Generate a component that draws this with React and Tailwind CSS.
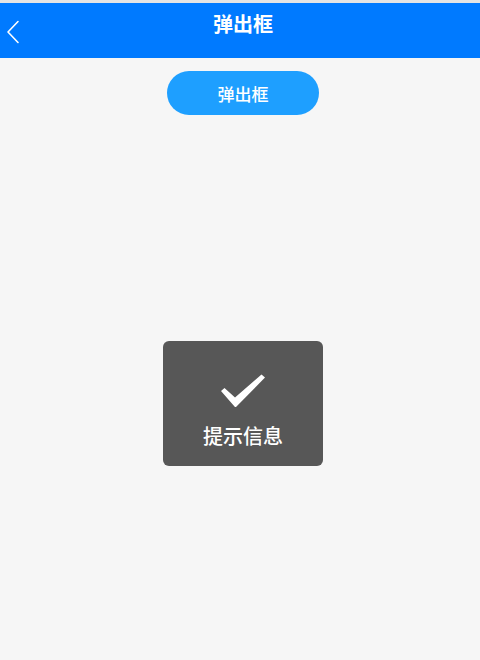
import React from "react";

const FONT = { fontFamily: '"Noto Sans CJK SC", "Noto Sans", sans-serif' };

function BackIcon() {
  return (
    <svg width="14" height="24" viewBox="0 0 14 24" fill="none">
      <path d="M12 1.5 L2 12 L12 22.5" stroke="white" strokeWidth="1.6" strokeLinecap="round" strokeLinejoin="round" />
    </svg>
  );
}

function CheckIcon() {
  return (
    <svg width="46" height="34" viewBox="0 0 46 34">
      <path d="M1 17 L4.5 14 L15 23.5 L41.5 0.5 L45 3.5 L16.5 32.5 Q15.5 33.5 14.5 32.5 Z" fill="white" />
    </svg>
  );
}

export default function App() {
  return (
    <div className="w-[480px] h-[660px] bg-[#f6f6f6] flex flex-col" style={FONT}>
      <div className="h-[3px] bg-[#e4e4e4]" />
      <header className="relative h-[55px] bg-[#007aff] flex items-start justify-center pt-[8px] pl-[6px]">
        <button type="button" className="absolute left-[6px] top-[17px]">
          <BackIcon />
        </button>
        <h1 className="text-white text-[20px] font-bold leading-[26px]">弹出框</h1>
      </header>
      <div className="flex justify-center pt-[13px] pl-[6px]">
        <button
          type="button"
          className="w-[152px] h-[44px] rounded-full bg-[#1e9fff] text-white text-[17px] font-medium leading-none"
        >
          弹出框
        </button>
      </div>
      <div className="flex justify-center pt-[226px] pl-[6px]">
        <div className="w-[160px] h-[125px] rounded-[6px] bg-[#575757] flex flex-col items-center pt-[33px]">
          <CheckIcon />
          <p className="mt-[16px] text-white text-[20px] font-medium leading-[24px]">提示信息</p>
        </div>
      </div>
    </div>
  );
}
